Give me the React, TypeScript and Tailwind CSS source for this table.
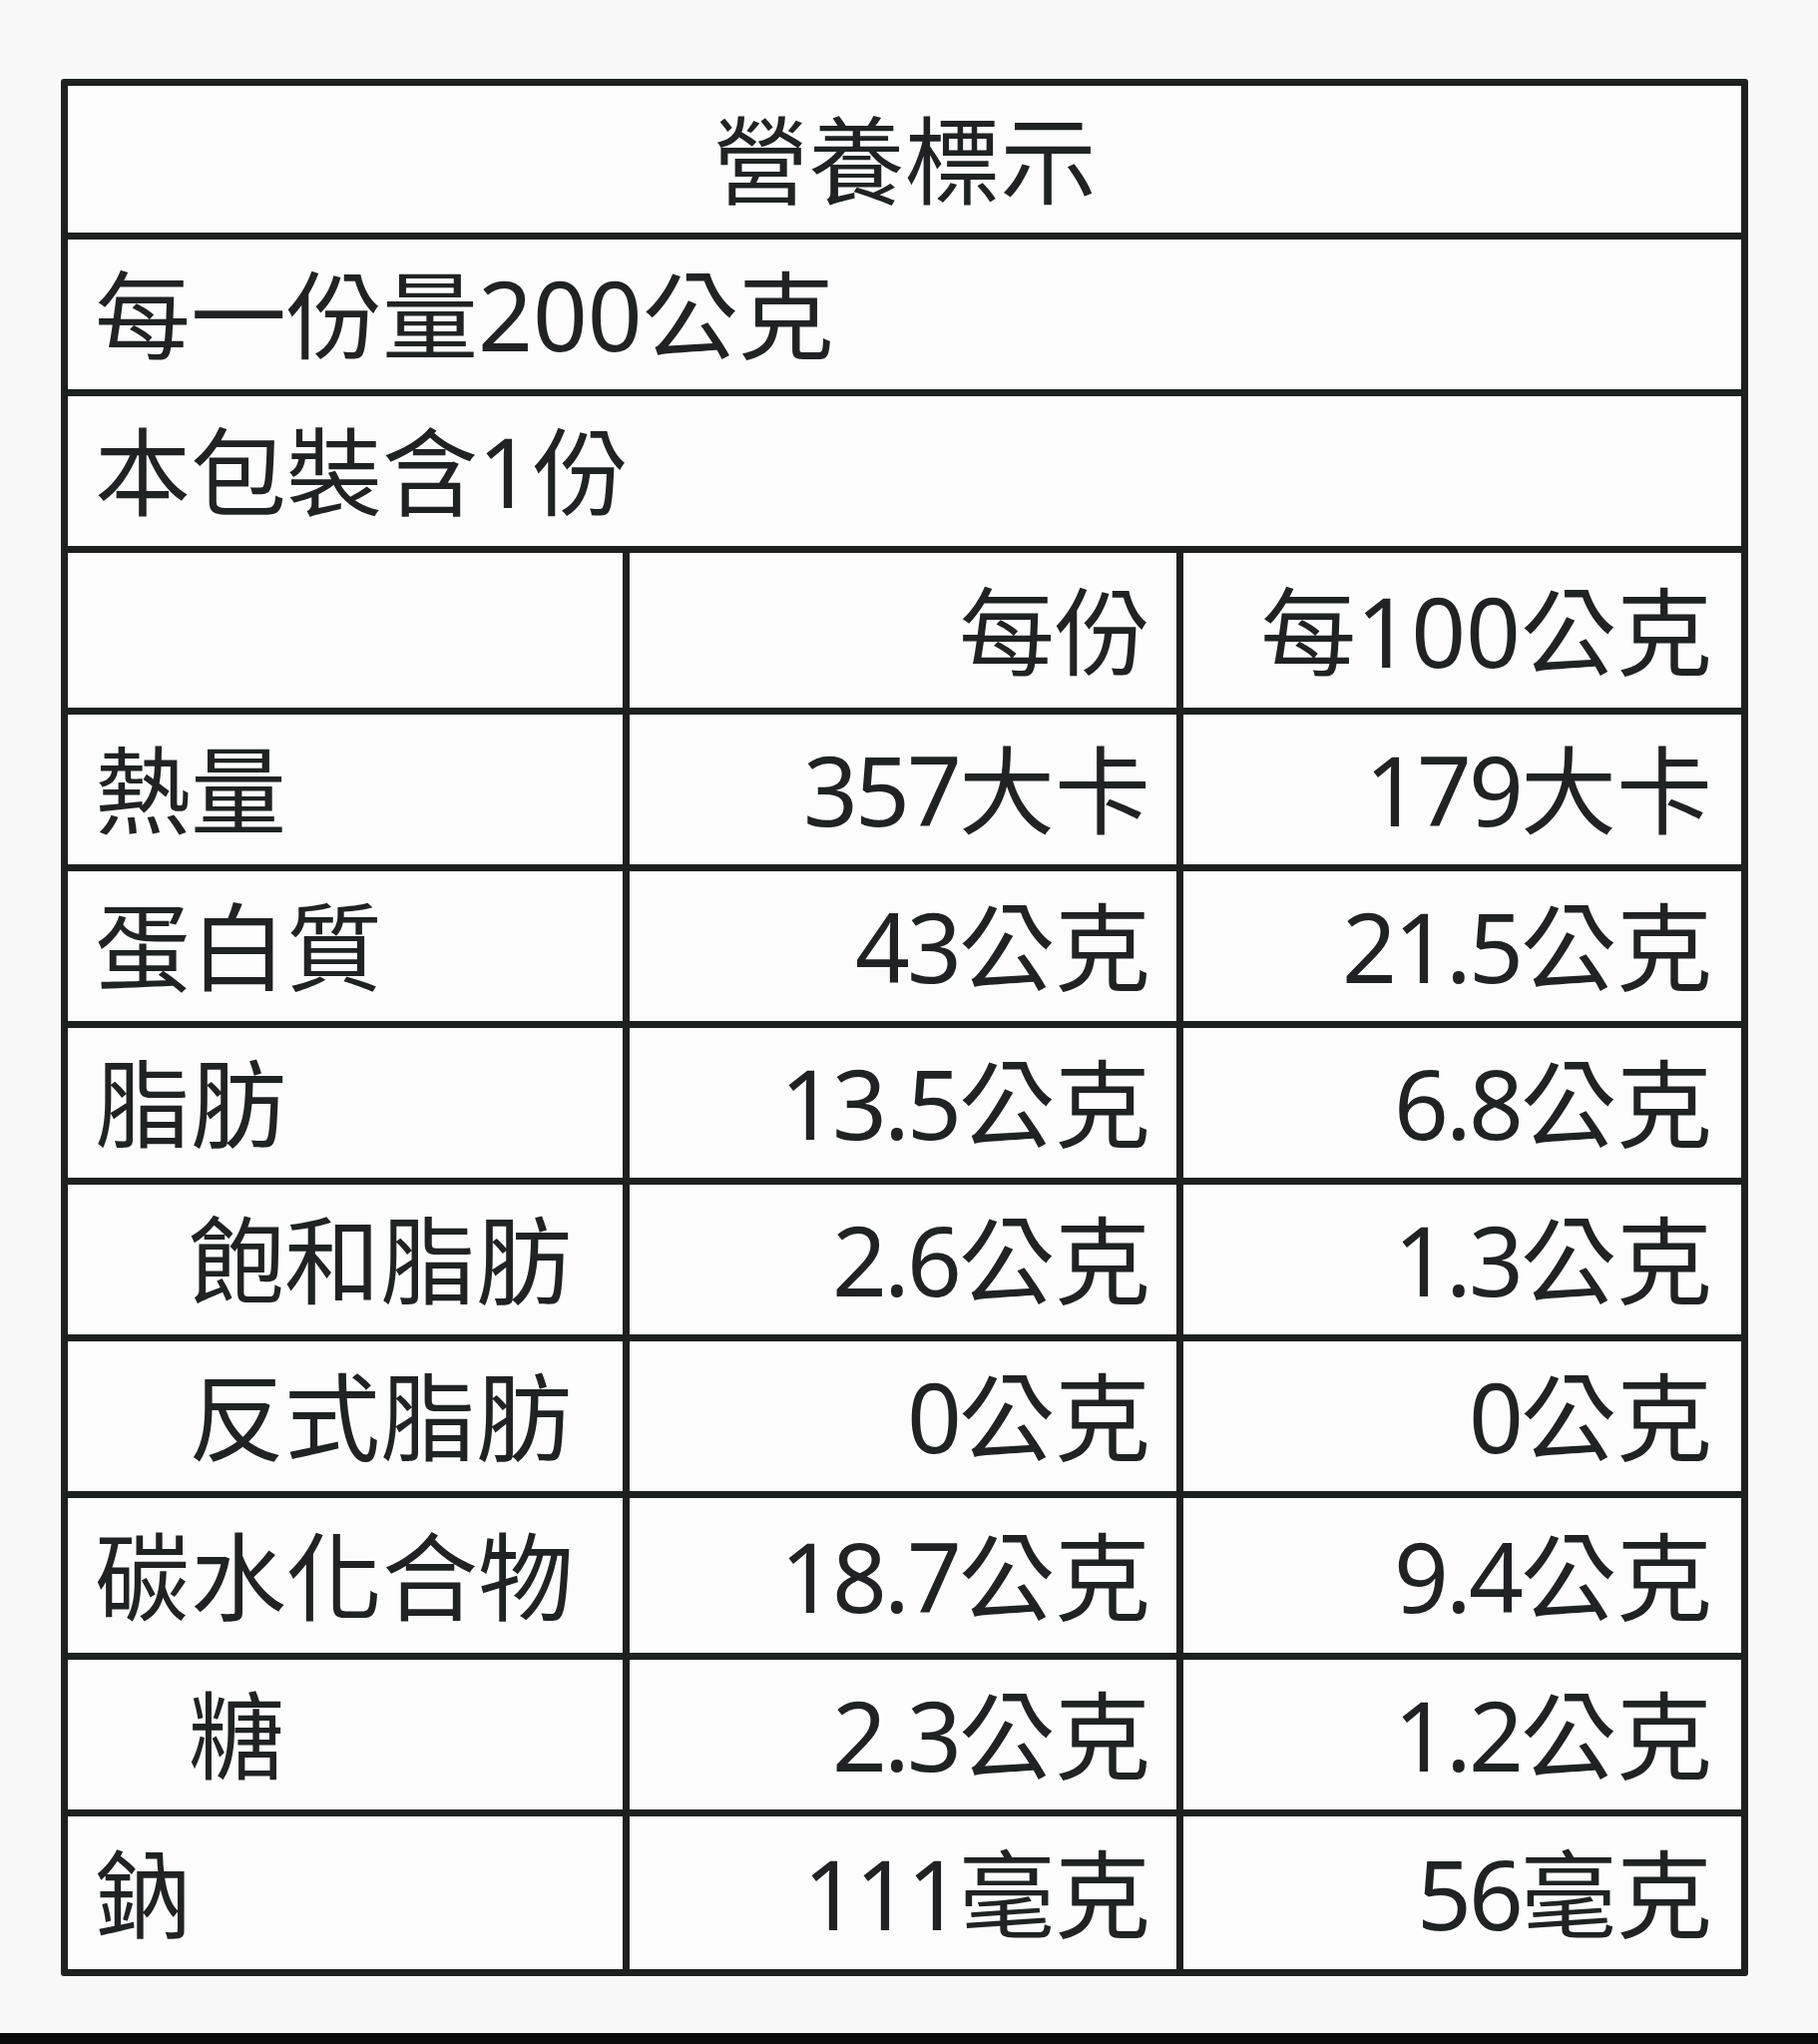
import React from "react";

const rows: { label: string; indent?: boolean; a: string; b: string; h: string }[] = [
  { label: "熱量", a: "357大卡", b: "179大卡", h: "h-[150px]" },
  { label: "蛋白質", a: "43公克", b: "21.5公克", h: "h-[150px]" },
  { label: "脂肪", a: "13.5公克", b: "6.8公克", h: "h-[150px]" },
  { label: "飽和脂肪", indent: true, a: "2.6公克", b: "1.3公克", h: "h-[150px]" },
  { label: "反式脂肪", indent: true, a: "0公克", b: "0公克", h: "h-[150px]" },
  { label: "碳水化合物", a: "18.7公克", b: "9.4公克", h: "h-[155px]" },
  { label: "糖", indent: true, a: "2.3公克", b: "1.2公克", h: "h-[150px]" },
  { label: "鈉", a: "111毫克", b: "56毫克", h: "h-[153px]" },
];

function Num({ children }: { children: string }) {
  const m = children.match(/^([0-9.]+)(.*)$/);
  if (!m) return <>{children}</>;
  return (
    <>
      <span className="tracking-[-0.03em]">{m[1]}</span>
      <span>{m[2]}</span>
    </>
  );
}

export default function App() {
  return (
    <div
      className="w-[1822px] h-[2048px] bg-[#f8f8f8] flex flex-col text-[#202323]"
      style={{ fontFamily: '"Noto Sans", "Noto Sans CJK TC", sans-serif' }}
    >
      <div className="pl-[61px] pt-[79px]">
        <div className="w-[1691px] bg-[#1c2120] p-[7px] grid grid-cols-[556px_548px_559px] gap-[7px] rounded-[3px] text-[96px] leading-none">
          <div className="col-span-3 h-[147px] bg-[#fcfcfc] flex items-center justify-center">
            營養標示
          </div>
          <div className="col-span-3 h-[150px] bg-[#fcfcfc] flex items-center pl-[27px]">
            每一份量200公克
          </div>
          <div className="col-span-3 h-[150px] bg-[#fcfcfc] flex items-center pl-[27px]">
            本包裝含1份
          </div>
          <div className="h-[155px] bg-[#fcfcfc]"></div>
          <div className="h-[155px] bg-[#fcfcfc] flex items-center justify-end pr-[26px]">每份</div>
          <div className="h-[155px] bg-[#fcfcfc] flex items-center justify-end pr-[29px]">每100公克</div>
          {rows.map((r) => (
            <React.Fragment key={r.label}>
              <div
                className={
                  r.indent
                    ? `${r.h} bg-[#fcfcfc] flex items-center pl-[121px]`
                    : `${r.h} bg-[#fcfcfc] flex items-center pl-[27px]`
                }
              >
                {r.label}
              </div>
              <div className={`${r.h} bg-[#fcfcfc] flex items-center justify-end pr-[26px] whitespace-nowrap`}>
                <Num>{r.a}</Num>
              </div>
              <div className={`${r.h} bg-[#fcfcfc] flex items-center justify-end pr-[29px] whitespace-nowrap`}>
                <Num>{r.b}</Num>
              </div>
            </React.Fragment>
          ))}
        </div>
      </div>
      <div className="mt-auto h-[11px] bg-[#0b0b0b]"></div>
    </div>
  );
}
